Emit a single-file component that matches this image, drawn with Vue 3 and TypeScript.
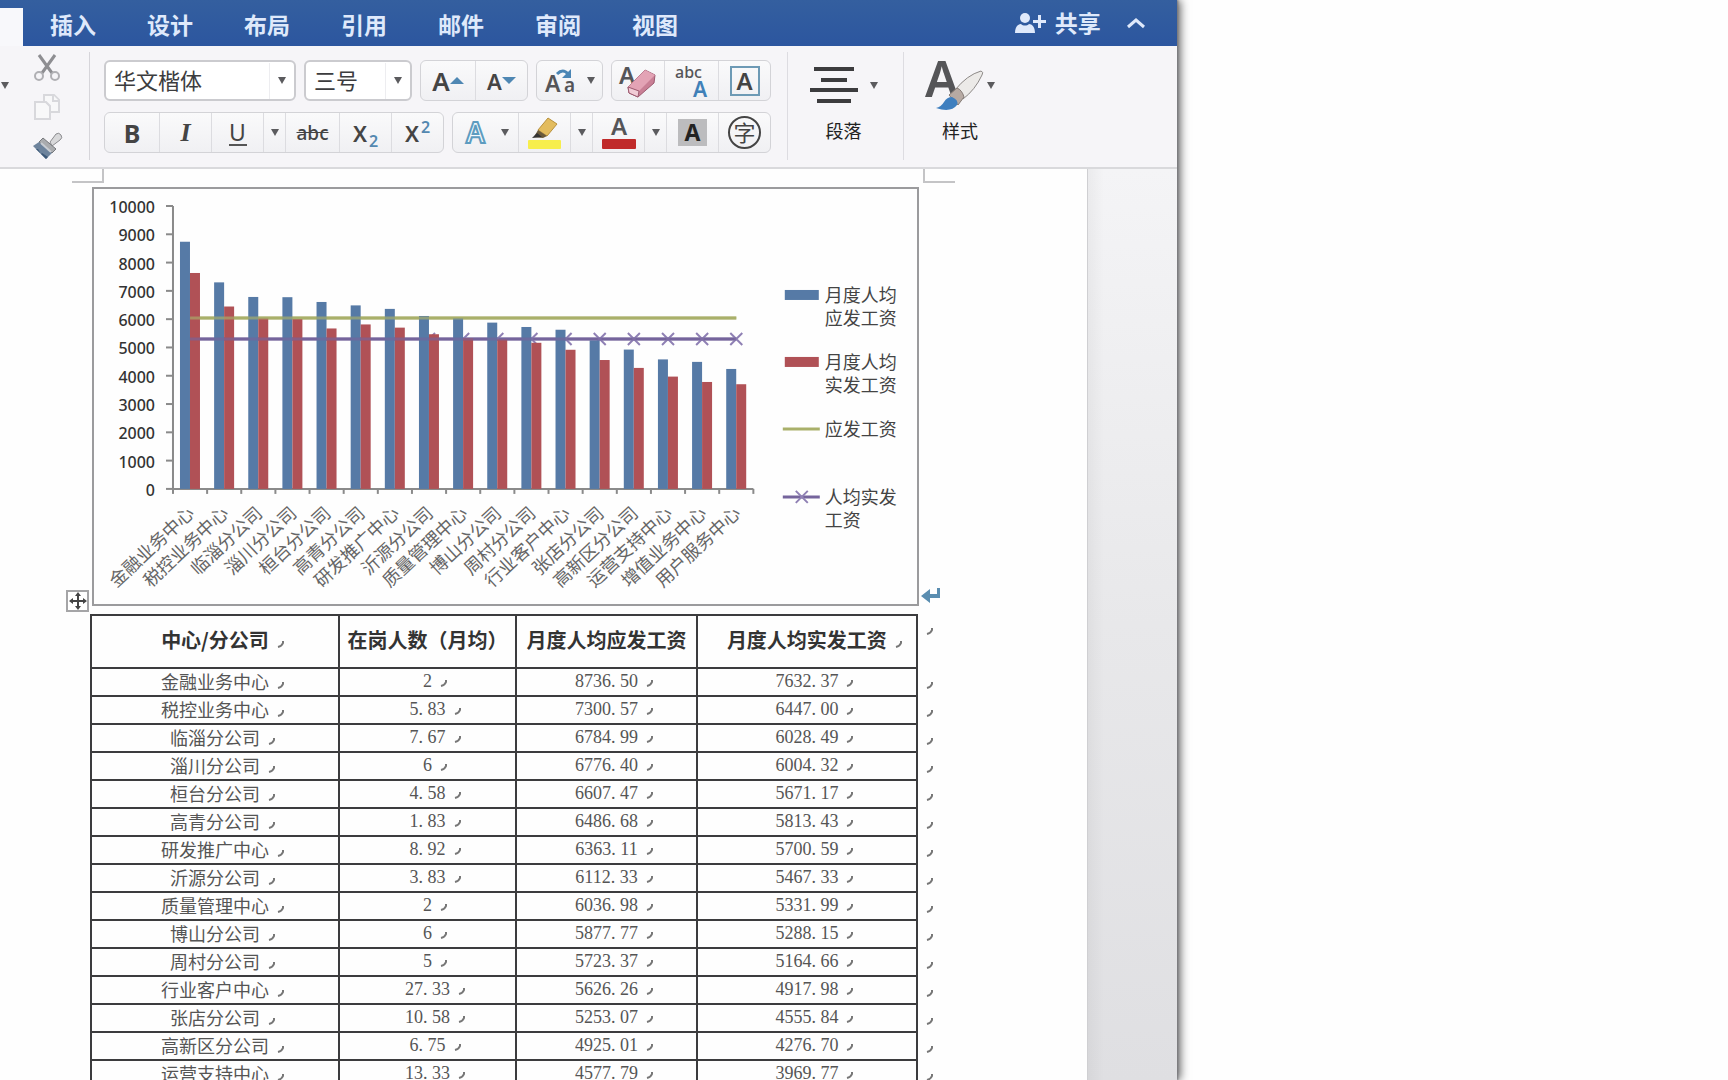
<script setup lang="ts">
interface Row {
  name: string
  staff: string
  gross: string
  net: string
}

const tabs: string[] = ['插入', '设计', '布局', '引用', '邮件', '审阅', '视图']

const rows: Row[] = [
  { name: '金融业务中心', staff: '2', gross: '8736.50', net: '7632.37' },
  { name: '税控业务中心', staff: '5.83', gross: '7300.57', net: '6447.00' },
  { name: '临淄分公司', staff: '7.67', gross: '6784.99', net: '6028.49' },
  { name: '淄川分公司', staff: '6', gross: '6776.40', net: '6004.32' },
  { name: '桓台分公司', staff: '4.58', gross: '6607.47', net: '5671.17' },
  { name: '高青分公司', staff: '1.83', gross: '6486.68', net: '5813.43' },
  { name: '研发推广中心', staff: '8.92', gross: '6363.11', net: '5700.59' },
  { name: '沂源分公司', staff: '3.83', gross: '6112.33', net: '5467.33' },
  { name: '质量管理中心', staff: '2', gross: '6036.98', net: '5331.99' },
  { name: '博山分公司', staff: '6', gross: '5877.77', net: '5288.15' },
  { name: '周村分公司', staff: '5', gross: '5723.37', net: '5164.66' },
  { name: '行业客户中心', staff: '27.33', gross: '5626.26', net: '4917.98' },
  { name: '张店分公司', staff: '10.58', gross: '5253.07', net: '4555.84' },
  { name: '高新区分公司', staff: '6.75', gross: '4925.01', net: '4276.70' },
  { name: '运营支持中心', staff: '13.33', gross: '4577.79', net: '3969.77' },
]

const columns = ['staff', 'gross', 'net'] as const

// Chart geometry, in viewBox units
const axisX = 81
const baseY = 302
const unit = 283 / 10000
const step = 34.15

const ticks = Array.from({ length: 11 }, (_, i) => i * 1000)
const yOf = (v: number): number => baseY - v * unit

const points = [
  ...rows.map((r) => ({ name: r.name, gross: Number(r.gross), net: Number(r.net) })),
  { name: '增值业务中心', gross: 4490, net: 3780 },
  { name: '用户服务中心', gross: 4240, net: 3700 },
].map((p, i) => ({ ...p, x: axisX + i * step, cx: axisX + i * step + step / 2 }))

const lineStart = points[0].cx
const lineEnd = points[points.length - 1].cx
const grossAvg = yOf(6040)
const netAvg = yOf(5300)

const legend = [
  { kind: 'bar', color: '#567aa6', y: 108, lines: ['月度人均', '应发工资'] },
  { kind: 'bar', color: '#b05156', y: 175, lines: ['月度人均', '实发工资'] },
  { kind: 'line', color: '#a9b06a', y: 242, lines: ['应发工资'] },
  { kind: 'cross', color: '#75649c', y: 310, lines: ['人均实发', '工资'] },
]

const parts = (v: string): string[] => v.split('.')
</script>

<template>
  <main class="window">
    <nav class="tabs">
      <span class="active-tab"></span>
      <a v-for="t in tabs" :key="t" href="#" class="tab">{{ t }}</a>
      <button class="share">
        <svg width="32" height="22" viewBox="0 0 32 22" fill="currentColor">
          <circle cx="10" cy="6" r="5" />
          <path d="M0 21c0-6 3-9 6-9 2 2 6 2 8 0 3 0 6 3 6 9z" />
          <path d="M23 3h3v5h5v3h-5v5h-3v-5h-5V8h5z" />
        </svg>
        <span>共享</span>
      </button>
      <button class="collapse" aria-label="折叠功能区">
        <svg width="20" height="12" viewBox="0 0 20 12"><path d="M2 10l8-7 8 7" fill="none" stroke="currentColor" stroke-width="3" /></svg>
      </button>
    </nav>

    <section class="ribbon">
      <button class="plain more" aria-label="粘贴选项"><i class="arrow"></i></button>
      <div class="clip">
        <button class="plain" aria-label="剪切">
          <svg width="28" height="28" viewBox="0 0 28 28" fill="none">
            <path d="M6 1l13 18M22 1L9 19" stroke="#8e8e92" stroke-width="3" />
            <circle cx="6" cy="22" r="4" stroke="#b0b0b4" stroke-width="2" />
            <circle cx="22" cy="22" r="4" stroke="#b0b0b4" stroke-width="2" />
          </svg>
        </button>
        <button class="plain" aria-label="复制">
          <svg width="28" height="28" viewBox="0 0 28 28" fill="#f8f8f9" stroke="#d8d8dc" stroke-width="2">
            <path d="M2 9h11l4 4v13H2z" />
            <path d="M11 2h10l5 5v12H17v-6l-4-4h-2z" />
            <path d="M20 2v6h6" />
          </svg>
        </button>
        <button class="plain" aria-label="格式刷">
          <svg width="30" height="28" viewBox="0 0 30 28">
            <path d="M18 10l6-8q3-2 5 1t-1 5l-8 6z" fill="#d8d8da" stroke="#8b8b8f" />
            <path d="M11 6l13 11-4 4L7 10z" fill="#a9abae" stroke="#77797d" />
            <path d="M7 10l13 11-6 6L1 14z" fill="#6d839c" />
            <path d="M1 14l13 13 2-2-6-4-1 1-3-5-2 0z" fill="#3c5878" />
            <path d="M9 11l10 9" stroke="#c8ccd2" stroke-width="2" />
          </svg>
        </button>
      </div>

      <div class="fonts">
        <div class="line">
          <label class="combo family">
            <select aria-label="字体"><option>华文楷体</option></select>
            <i class="arrow"></i>
          </label>
          <label class="combo size">
            <select aria-label="字号"><option>三号</option></select>
            <i class="arrow"></i>
          </label>
          <div class="group">
            <button class="w54" aria-label="增大字号"><span class="grow">A</span><i class="tri up"></i></button>
            <button class="w52" aria-label="减小字号"><span class="shrink">A</span><i class="tri down"></i></button>
          </div>
          <div class="group">
            <button class="w66 spread" aria-label="更改大小写">
              <svg width="32" height="28" viewBox="0 0 32 28">
                <text x="0" y="25" class="glyph" font-size="23">A</text>
                <text x="19" y="25" class="glyph" font-size="19">a</text>
                <path d="M12 7q6-6 11 0" fill="none" stroke="#4b86b5" stroke-width="3" />
                <path d="M26 2v9h-9z" fill="#4b86b5" />
              </svg>
              <i class="arrow"></i>
            </button>
          </div>
          <div class="group">
            <button class="w52" aria-label="清除格式">
              <svg width="38" height="34" viewBox="0 0 38 34">
                <text x="0" y="20" class="glyph" font-size="24">A</text>
                <path d="M9 23L26 6l10 5-1 8-16 14-9-4z" fill="#c97f95" stroke="#9d5a70" />
                <path d="M9 23L26 6l10 5-16 16z" fill="#e3a3b5" />
                <path d="M20 27l-1 6-9-4-1-6z" fill="#f0cbd5" stroke="#9d5a70" />
              </svg>
            </button>
            <button class="w54" aria-label="拼音指南">
              <svg width="34" height="34" viewBox="0 0 34 34">
                <text x="0" y="14" class="glyph thin" font-size="16">abc</text>
                <text x="18" y="33" class="glyph blue" font-size="21">A</text>
              </svg>
            </button>
            <button class="w52" aria-label="字符边框"><span class="boxed">A</span></button>
          </div>
        </div>
        <div class="line">
          <div class="group">
            <button class="w54"><b class="big">B</b></button>
            <button class="w52"><em class="ital">I</em></button>
            <button class="w52"><span class="under">U</span></button>
            <button class="w22" aria-label="下划线样式"><i class="arrow"></i></button>
            <button class="w54"><s class="strike">abc</s></button>
            <button class="w52"><span class="script">X<sub>2</sub></span></button>
            <button class="w52"><span class="script">X<sup>2</sup></span></button>
          </div>
          <div class="group">
            <button class="w66 spread" aria-label="文本效果">
              <svg width="28" height="28" viewBox="0 0 28 28">
                <text x="3" y="24" class="outline" font-size="28">A</text>
              </svg>
              <i class="arrow"></i>
            </button>
            <button class="w52" aria-label="突出显示">
              <svg width="36" height="34" viewBox="0 0 36 34">
                <rect x="1" y="24" width="33" height="9" rx="1" fill="#f7ee4c" />
                <path d="M11 14L21 2l9 6-10 12z" fill="#e3bc5e" stroke="#b8913c" />
                <path d="M11 14l9 6-4 2-9-1z" fill="#6b5a3a" />
                <path d="M10 17l5 4-10 1z" fill="#333" />
              </svg>
            </button>
            <button class="w22" aria-label="突出显示颜色"><i class="arrow"></i></button>
            <button class="w52" aria-label="字体颜色">
              <svg width="34" height="34" viewBox="0 0 34 34">
                <text x="17" y="19" text-anchor="middle" class="glyph" font-size="24">A</text>
                <rect y="23" width="34" height="10" rx="1" fill="#c02a2a" />
              </svg>
            </button>
            <button class="w22" aria-label="字体颜色选项"><i class="arrow"></i></button>
            <button class="w52" aria-label="字符底纹"><span class="shade">A</span></button>
            <button class="w52" aria-label="带圈字符"><span class="ring">字</span></button>
          </div>
        </div>
      </div>

      <button class="plain big-tool para">
        <span class="pic">
          <svg width="48" height="38" viewBox="0 0 48 38" stroke="#3c3c3e" stroke-width="4"><path d="M4 3h40M11 14h26M0 24h48M7 35h34" /></svg>
          <i class="arrow"></i>
        </span>
        <span class="caption">段落</span>
      </button>
      <button class="plain big-tool styles">
        <span class="pic">
          <svg width="60" height="52" viewBox="0 0 60 52">
            <text x="0" y="38" class="glyph" font-size="50">A</text>
            <path d="M30 31Q42 16 56 12q3 1 1 4Q50 31 38 40z" fill="#eceae8" stroke="#8d8987" />
            <path d="M24 36l8-7q5 2 7 9l-6 8z" fill="#b7aaa3" stroke="#857b76" />
            <path d="M11 49q5-1 8-6 3-5 8-5 7 3 5 8-6 8-21 3z" fill="#3f7fbf" />
          </svg>
          <i class="arrow"></i>
        </span>
        <span class="caption">样式</span>
      </button>
    </section>

    <div class="workspace">
      <article class="page">
        <div class="crops"><span class="crop left"></span><span class="crop right"></span></div>

        <figure class="chart">
          <svg viewBox="2 2 823 415" role="img" aria-label="月度人均工资">
            <g stroke="#8a8a8a" stroke-width="2">
              <path :d="`M${axisX} 19V${baseY}H${axisX + 17 * step}`" fill="none" />
              <path v-for="t in ticks" :key="t" :d="`M${axisX - 7} ${yOf(t)}h7`" />
              <path v-for="i in 18" :key="i" :d="`M${axisX + (i - 1) * step} ${baseY}v5`" />
            </g>
            <text v-for="t in ticks" :key="t" x="63" :y="yOf(t) + 7" class="tick">{{ t }}</text>

            <path :d="`M${lineStart} ${grossAvg}H${lineEnd}`" class="gross-line" />
            <path :d="`M${lineStart} ${netAvg}H${lineEnd}`" class="net-line" />
            <path v-for="p in points" :key="p.name" :d="`M${p.cx - 6} ${netAvg - 6}l12 12m0-12l-12 12`" class="cross" />
            <g v-for="p in points" :key="p.name">
              <rect :x="p.x + 7" :y="yOf(p.gross)" width="10" :height="baseY - yOf(p.gross)" fill="#567aa6" />
              <rect :x="p.x + 17" :y="yOf(p.net)" width="10" :height="baseY - yOf(p.net)" fill="#b05156" />
            </g>
            <path :d="`M${lineStart} ${grossAvg}H${lineEnd}`" class="gross-line over" />
            <path :d="`M${lineStart} ${netAvg}H${lineEnd}`" class="net-line over" />

            <text
              v-for="p in points"
              :key="p.name"
              class="category"
              :transform="`translate(${p.cx} 322) rotate(-43)`"
            >{{ p.name }}</text>

            <g v-for="l in legend" :key="l.y">
              <rect v-if="l.kind === 'bar'" x="693" :y="l.y - 5" width="34" height="10" :fill="l.color" />
              <path v-else :d="`M691 ${l.y}h37`" :stroke="l.color" stroke-width="3" />
              <path v-if="l.kind === 'cross'" :d="`M704 ${l.y - 6}l12 12m0-12l-12 12`" class="cross" />
              <text v-for="(s, i) in l.lines" :key="s" x="733" :y="l.y + 7 + i * 23" class="key">{{ s }}</text>
            </g>
          </svg>
          <svg class="return" width="20" height="16" viewBox="0 0 20 16"><path d="M0 8l9-7v5h7V0h3v10H9v5z" fill="#5a8db0" /></svg>
          <span class="handle">
            <svg width="18" height="18" viewBox="0 0 18 18" fill="#444"><path d="M8 4H6l3-4 3 4h-2v4h4V6l4 3-4 3v-2h-4v4h2l-3 4-3-4h2v-4H4v2L0 9l4-3v2h4z" /></svg>
          </span>
        </figure>

        <table>
          <colgroup><col class="c1" /><col class="c2" /><col class="c3" /><col class="c4" /><col class="c5" /></colgroup>
          <thead>
            <tr>
              <th>中心/分公司<svg class="mark" viewBox="0 0 7 7"><path d="M6 0v2Q5 5 1 6" /></svg></th>
              <th>在岗人数（月均）</th>
              <th>月度人均应发工资</th>
              <th>月度人均实发工资<svg class="mark" viewBox="0 0 7 7"><path d="M6 0v2Q5 5 1 6" /></svg></th>
              <td class="end first"><svg class="mark" viewBox="0 0 7 7"><path d="M6 0v2Q5 5 1 6" /></svg></td>
            </tr>
          </thead>
          <tbody>
            <tr v-for="r in rows" :key="r.name">
              <td>{{ r.name }}<svg class="mark" viewBox="0 0 7 7"><path d="M6 0v2Q5 5 1 6" /></svg></td>
              <td v-for="c in columns" :key="c" class="num">{{ parts(r[c])[0] }}<template v-if="parts(r[c])[1]"><span class="dot">.</span>{{ parts(r[c])[1] }}</template><svg class="mark" viewBox="0 0 7 7"><path d="M6 0v2Q5 5 1 6" /></svg></td>
              <td class="end"><svg class="mark" viewBox="0 0 7 7"><path d="M6 0v2Q5 5 1 6" /></svg></td>
            </tr>
          </tbody>
        </table>
      </article>
      <aside class="gutter"></aside>
    </div>
  </main>
</template>

<style>
body {
  background: #fefefe;
  overflow: hidden;
}
</style>

<style scoped>
* {
  box-sizing: border-box;
}
.window {
  width: 68.1%;
  height: 100vh;
  overflow: hidden;
  display: flex;
  flex-direction: column;
  font-family: "Noto Sans", "Noto Sans CJK SC", sans-serif;
  color: #444;
  background: #fff;
  clip-path: inset(0 -20px 0 0);
  box-shadow: 1px 0 2px #77777c, 3px 0 9px rgba(0, 0, 0, 0.65);
}
svg {
  overflow: visible;
}
button {
  font: inherit;
  color: inherit;
  border: 0;
  padding: 0;
  background: none;
  display: flex;
  align-items: center;
  justify-content: center;
}
.tabs {
  height: 46px;
  flex: none;
  display: flex;
  align-items: center;
  color: #dfe9fb;
  font-size: 23px;
  font-weight: 700;
  background: linear-gradient(#345f9f, #2c569f);
}
.active-tab {
  width: 23px;
  height: 38px;
  align-self: flex-end;
  background: #f8f8fb;
  margin-right: 27px;
}
.tab {
  color: inherit;
  text-decoration: none;
  line-height: 32px;
  margin: 4px 51px 0 0;
}
.share {
  margin-left: auto;
  gap: 8px;
  line-height: 32px;
}
.collapse {
  margin: 0 31px 0 25px;
}
.ribbon {
  height: 123px;
  flex: none;
  display: flex;
  align-items: flex-start;
  padding: 6px 0 8px;
  background: #f6f5f8;
  border-bottom: 2px solid #d9d9dc;
}
.arrow {
  display: block;
  flex: none;
  border: 4px solid transparent;
  border-top: 7px solid #5b5b5e;
  border-bottom: 0;
}
.more {
  width: 10px;
  height: 66px;
}
.clip {
  width: 80px;
  height: 108px;
  padding: 2px 5px 0 0;
  display: flex;
  flex-direction: column;
  align-items: center;
  gap: 11px;
  border-right: 1px solid #d6d5da;
}
.fonts {
  height: 108px;
  padding: 8px 16px 0 14px;
  display: flex;
  flex-direction: column;
  gap: 11px;
  border-right: 1px solid #dddce1;
}
.line {
  display: flex;
  gap: 8px;
}
.combo {
  height: 41px;
  display: flex;
  align-items: center;
  background: #fff;
  border: 2px solid #cbcbcf;
  border-radius: 6px;
  padding-right: 8px;
}
.family {
  width: 192px;
}
.size {
  width: 108px;
}
.combo select {
  flex: 1;
  min-width: 0;
  height: 36px;
  appearance: none;
  border: 0;
  border-right: 1px solid #ededf0;
  margin-right: 8px;
  padding: 0 0 4px 8px;
  background: none;
  font: 22px/32px "Noto Sans CJK SC", sans-serif;
  color: #3c3c3e;
}
.group {
  height: 41px;
  display: flex;
  border: 1px solid #d3d3d7;
  border-radius: 6px;
  background: linear-gradient(#fafafb, #f0f0f3);
}
.group button + button {
  border-left: 1px solid #dcdce0;
}
.w22 { width: 22px; }
.w52 { width: 52px; }
.w54 { width: 54px; }
.w66 { width: 65px; }
.spread {
  gap: 10px;
}
.glyph,
.outline {
  font-family: "Noto Sans", sans-serif;
  font-weight: 600;
  fill: #555558;
}
.thin {
  font-weight: 500;
}
.blue {
  fill: #3f80b8;
}
.outline {
  fill: #f4fafd;
  stroke: #5d9cc0;
  stroke-width: 2px;
}
.grow,
.shrink {
  font-weight: 600;
  font-size: 26px;
  line-height: 36px;
}
.shrink {
  font-size: 22px;
}
.tri {
  border: 7px solid transparent;
}
.tri.up {
  border-top: 0;
  border-bottom: 7px solid #4f87b3;
}
.tri.down {
  border-bottom: 0;
  border-top: 7px solid #4f87b3;
}
.boxed {
  width: 30px;
  height: 30px;
  border: 2px solid #6d9ab5;
  font-size: 24px;
  line-height: 26px;
  font-weight: 600;
}
.big {
  font-size: 25px;
}
.ital {
  font: italic bold 26px/32px "Liberation Serif", serif;
}
.under {
  width: 18px;
  border-bottom: 2px solid #555;
  font-size: 23px;
  line-height: 24px;
}
.strike {
  font-size: 19px;
  font-weight: 500;
}
.script {
  font-size: 22px;
  font-weight: 600;
  line-height: 30px;
}
.script sub,
.script sup {
  font-size: 16px;
  line-height: 0;
  color: #5488b0;
  margin-left: 2px;
}
.shade {
  width: 29px;
  height: 27px;
  background: #bcbcbe;
  color: #222;
  font-size: 23px;
  line-height: 26px;
  font-weight: 700;
}
.ring {
  width: 33px;
  height: 33px;
  border: 2px solid #444;
  border-radius: 50%;
  font-size: 22px;
  line-height: 28px;
}
.big-tool {
  height: 108px;
  flex-direction: column;
  justify-content: flex-start;
}
.para {
  width: 116px;
  padding-right: 4px;
  border-right: 1px solid #dddce1;
}
.styles {
  width: 112px;
}
.pic {
  height: 66px;
  display: flex;
  align-items: center;
  gap: 12px;
}
.styles .pic {
  gap: 2px;
}
.caption {
  font-size: 18px;
  line-height: 26px;
  color: #222;
}
.workspace {
  flex: 1;
  min-height: 0;
  display: flex;
}
.page {
  flex: 1;
  min-width: 0;
  padding: 0 152px 0 90px;
  background: #fefefe;
  border-right: 1px solid #cfcfd2;
}
.gutter {
  width: 89px;
  flex: none;
  background: linear-gradient(90deg, rgba(0, 0, 0, 0.04), transparent 16px), linear-gradient(#f4f4f6, #e8e8ea 50%, #dfdfe2);
}
.crops {
  height: 18px;
  display: flex;
  justify-content: space-between;
  align-items: flex-start;
  margin: 0 -20px 0 -18px;
}
.crop {
  width: 32px;
  height: 14px;
  border-bottom: 2px solid #c4c4c6;
}
.crop.left {
  border-right: 2px solid #c4c4c6;
}
.crop.right {
  border-left: 2px solid #c4c4c6;
}
.chart {
  position: relative;
  margin: 0 16px 8px 2px;
  border: 2px solid #9b9b9d;
}
.chart > svg:first-child {
  display: block;
  width: 100%;
}
.return {
  position: absolute;
  right: -24px;
  bottom: 0;
}
.handle {
  position: absolute;
  left: -28px;
  bottom: -8px;
  width: 23px;
  height: 22px;
  display: flex;
  align-items: center;
  justify-content: center;
  border: 2px solid #a5a5a7;
  background: #fff;
}
.tick {
  font: 500 16px "Noto Sans", sans-serif;
  text-anchor: end;
  fill: #333;
}
.category {
  font: 18px "Noto Sans CJK SC", sans-serif;
  text-anchor: end;
  dominant-baseline: central;
  fill: #666;
}
.key {
  font: 18px "Noto Sans CJK SC", sans-serif;
  fill: #444;
}
.gross-line {
  stroke: #a9b06a;
  stroke-width: 3px;
}
.net-line {
  stroke: #75649c;
  stroke-width: 3px;
}
.over {
  opacity: 0.65;
}
.cross {
  fill: none;
  stroke: #8f80b4;
  stroke-width: 2px;
}
table {
  width: 100%;
  table-layout: fixed;
  border-collapse: collapse;
  text-align: center;
  font-family: "Noto Sans CJK SC", sans-serif;
  font-size: 18px;
  line-height: 22px;
  color: #555;
}
.c1 { width: 248px; }
.c2 { width: 177px; }
.c3 { width: 181px; }
.c5 { width: 18px; }
th,
td {
  height: 28px;
  padding: 0 0 2px;
  border: 2px solid #3c3c3e;
  white-space: nowrap;
}
th {
  height: 53px;
  font-size: 20px;
  color: #333;
}
.num {
  font-family: "Liberation Serif", serif;
}
.dot {
  display: inline-block;
  width: 9px;
  text-align: left;
}
.mark {
  width: 7px;
  height: 7px;
  margin: 0 -15px 0 8px;
  fill: none;
  stroke: #777;
  stroke-width: 2px;
}
td.end {
  border-width: 0 0 0 2px;
  text-align: left;
}
td.first {
  padding-bottom: 28px;
}
</style>
